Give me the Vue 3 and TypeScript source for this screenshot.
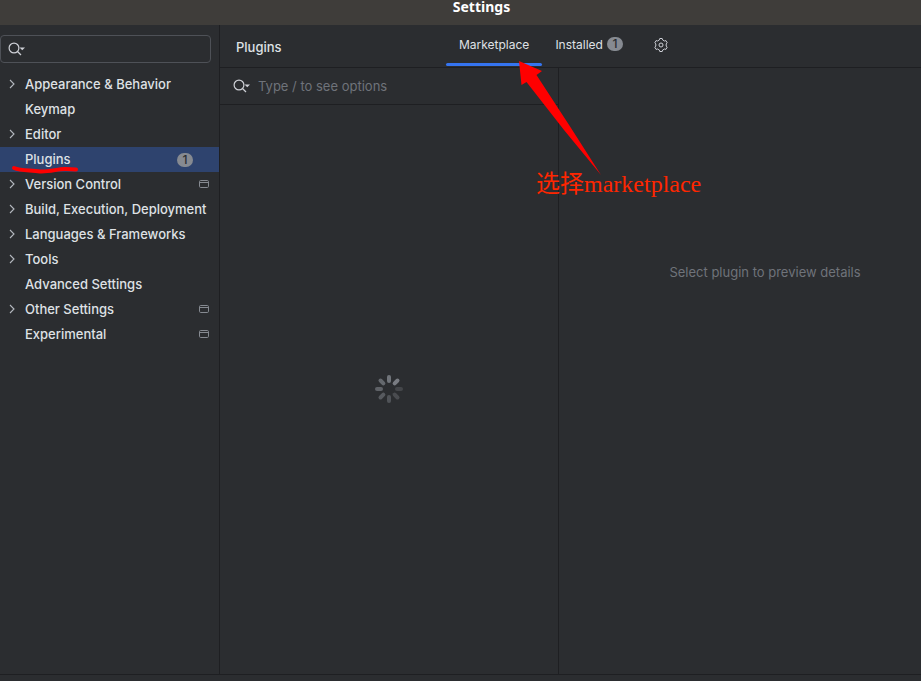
<script setup lang="ts">
import { ref } from 'vue'

interface Category {
  name: string
  expandable?: boolean
  count?: number
  projectLevel?: boolean
}

const categories: Category[] = [
  { name: 'Appearance & Behavior', expandable: true },
  { name: 'Keymap' },
  { name: 'Editor', expandable: true },
  { name: 'Plugins', count: 1 },
  { name: 'Version Control', expandable: true, projectLevel: true },
  { name: 'Build, Execution, Deployment', expandable: true },
  { name: 'Languages & Frameworks', expandable: true },
  { name: 'Tools', expandable: true },
  { name: 'Advanced Settings' },
  { name: 'Other Settings', expandable: true, projectLevel: true },
  { name: 'Experimental', projectLevel: true },
]

const selected = ref('Plugins')
const activeTab = ref('Marketplace')
const settingsQuery = ref('')
const pluginQuery = ref('')

const spokes = [
  { angle: 0, opacity: 0.85 },
  { angle: 45, opacity: 0.95 },
  { angle: 90, opacity: 0.3 },
  { angle: 135, opacity: 0.38 },
  { angle: 180, opacity: 0.46 },
  { angle: 225, opacity: 0.54 },
  { angle: 270, opacity: 0.64 },
  { angle: 315, opacity: 0.7 },
]
</script>

<template>
  <div class="window">
    <header class="titlebar">Settings</header>

    <div class="content">
      <aside class="sidebar">
        <label class="settings-search">
          <svg class="search-icon" width="18" height="14" viewBox="0 0 18 14" aria-hidden="true">
            <circle cx="6" cy="6" r="4.9" />
            <path d="M9.5 9.5 L13 13" />
            <path class="solid" d="M11.5 5.5 H17 L14.25 8.3 Z" />
          </svg>
          <input v-model="settingsQuery" type="text" aria-label="Search settings" />
        </label>

        <nav aria-label="Settings categories">
          <ul class="tree">
            <li v-for="item in categories" :key="item.name">
              <button
                type="button"
                class="tree-row"
                :class="{ selected: item.name === selected }"
                @click="selected = item.name"
              >
                <span class="toggle">
                  <svg v-if="item.expandable" width="6" height="10" viewBox="0 0 6 10" aria-hidden="true">
                    <path d="M1 1 L5 5 L1 9" />
                  </svg>
                </span>
                <span class="tree-label">{{ item.name }}</span>
                <span v-if="item.count" class="badge tree-badge">{{ item.count }}</span>
                <svg v-if="item.projectLevel" class="project-icon" width="10" height="8" viewBox="0 0 10 8" aria-hidden="true">
                  <rect x="0.5" y="0.5" width="9" height="7" rx="1.2" />
                  <path d="M0.5 2.5 H9.5" />
                </svg>
              </button>
            </li>
          </ul>
        </nav>
      </aside>

      <main class="main">
        <div class="page-header">
          <h1>Plugins</h1>
          <div class="tabs" role="tablist">
            <button
              type="button"
              role="tab"
              class="tab"
              :class="{ active: activeTab === 'Marketplace' }"
              :aria-selected="activeTab === 'Marketplace'"
              @click="activeTab = 'Marketplace'"
            >Marketplace</button>
            <button
              type="button"
              role="tab"
              class="tab"
              :class="{ active: activeTab === 'Installed' }"
              :aria-selected="activeTab === 'Installed'"
              @click="activeTab = 'Installed'"
            >Installed<span class="badge">1</span></button>
          </div>
          <button type="button" class="gear" aria-label="Plugin settings">
            <svg width="16" height="16" viewBox="0 0 16 16" aria-hidden="true">
              <path d="M6.4 2.9 L6.8 1.5 H9.2 L9.6 2.9 L11.5 4 L12.9 3.6 L14.2 5.8 L13.2 6.9 V9.1 L14.2 10.2 L12.9 12.4 L11.5 12 L9.6 13.1 L9.2 14.5 H6.8 L6.4 13.1 L4.5 12 L3.1 12.4 L1.8 10.2 L2.8 9.1 V6.9 L1.8 5.8 L3.1 3.6 L4.5 4 Z" />
              <circle cx="8" cy="8" r="2" />
            </svg>
          </button>
        </div>

        <div class="panes">
          <section class="plugin-list">
            <label class="plugin-search">
              <svg class="search-icon" width="18" height="14" viewBox="0 0 18 14" aria-hidden="true">
                <circle cx="6" cy="6" r="4.9" />
                <path d="M9.5 9.5 L13 13" />
                <path class="solid" d="M11.5 5.5 H17 L14.25 8.3 Z" />
              </svg>
              <input v-model="pluginQuery" type="text" placeholder="Type / to see options" aria-label="Search plugins" />
            </label>
            <div class="loading" role="status" aria-label="Loading">
              <svg width="28" height="28" viewBox="-14 -14 28 28">
                <rect
                  v-for="spoke in spokes"
                  :key="spoke.angle"
                  x="-2"
                  y="-14"
                  width="4"
                  height="8"
                  rx="2"
                  :opacity="spoke.opacity"
                  :transform="`rotate(${spoke.angle})`"
                />
              </svg>
            </div>
          </section>
          <section class="details">
            <p>Select plugin to preview details</p>
          </section>
        </div>
      </main>
    </div>

    <footer class="bottom"></footer>

    <svg class="underline-mark" width="70" height="10" viewBox="0 0 70 10" aria-hidden="true">
      <path d="M3 3 C10 6 20 5 29 6.500 C39 7 48 3.500 55 4 L65 4.500" />
    </svg>
    <svg class="arrow-mark" width="84" height="116" viewBox="0 0 84 116" aria-hidden="true">
      <path d="M1 0 L24 10 L18.500 14 L53 67 L83 114 L46 69 L8.500 21 L3.500 24 Z" />
    </svg>
    <p class="note">选择marketplace</p>
  </div>
</template>

<style>
body {
  margin: 0;
  background: #2b2d30;
}
</style>

<style scoped>
.window {
  position: relative;
  display: flex;
  flex-direction: column;
  min-height: 100vh;
  overflow: hidden;
  background: #2b2d30;
  color: #dfe1e5;
  font-family: Inter, "Noto Sans", sans-serif;
  font-size: 13px;
  line-height: 16px;
}

button,
input {
  margin: 0;
  padding: 0;
  border: 0;
  outline: 0;
  background: none;
  color: inherit;
  font: inherit;
}

.titlebar {
  height: 25px;
  padding-left: 42px;
  box-sizing: border-box;
  background: #3f3d3a;
  color: #ffffff;
  font: 700 14px/14px "Noto Sans", "Open Sans", sans-serif;
  text-align: center;
}

.content {
  display: flex;
  flex: 1;
}

.sidebar {
  flex: 0 0 219px;
  min-width: 0;
  border-right: 1px solid #1e1f22;
}

.settings-search {
  display: flex;
  align-items: center;
  height: 26px;
  margin: 10px 8px 9px 0;
  padding-left: 7px;
  border: 1px solid #4e5157;
  border-radius: 4px;
}

.search-icon {
  flex: none;
  fill: none;
  stroke: #ced0d6;
  stroke-width: 1.2;
}

.search-icon .solid {
  fill: #ced0d6;
  stroke: none;
}

input {
  flex: 1;
  min-width: 0;
}

input::placeholder {
  color: #6f737a;
  opacity: 1;
}

.tree {
  margin: 0;
  padding: 0;
  list-style: none;
}

.tree-row {
  display: flex;
  align-items: center;
  width: 100%;
  height: 25px;
  padding: 0 10px 2px 9px;
  box-sizing: border-box;
  font-weight: 500;
  text-align: left;
  white-space: nowrap;
}

.tree-row.selected {
  background: #2e436e;
}

.toggle {
  display: flex;
  flex: 0 0 16px;
  fill: none;
  stroke: #b4b8bf;
  stroke-width: 1.1;
}

.tree-label {
  flex: 1;
  min-width: 0;
}

.badge {
  display: inline-block;
  width: 16px;
  height: 14px;
  border-radius: 7px;
  background: #868a91;
  color: #2b2d30;
  font-size: 12px;
  font-weight: 500;
  line-height: 14px;
  text-align: center;
}

.tree-badge {
  margin: 2px 16px 0 0;
}

.project-icon {
  fill: none;
  stroke: #868a91;
}

.main {
  display: flex;
  flex: 1;
  flex-direction: column;
  min-width: 0;
}

.page-header {
  display: flex;
  height: 42px;
  border-bottom: 1px solid #1e1f22;
}

h1 {
  flex: 0 0 210px;
  margin: 0;
  padding: 14px 0 0 16px;
  font-size: 13px;
  font-weight: 500;
}

.tabs {
  display: flex;
}

.tab {
  display: flex;
  align-items: center;
  gap: 4px;
  height: 41px;
  padding: 1px 13px 0;
  box-sizing: border-box;
  border-bottom: 3px solid transparent;
  font-size: 12px;
  white-space: nowrap;
}

.tab.active {
  position: relative;
}

.tab.active::after {
  position: absolute;
  right: 0;
  bottom: -3px;
  left: 0;
  height: 3px;
  border-radius: 2px;
  background: #3574f0;
  content: "";
}

.tab .badge {
  margin-bottom: 1px;
}

.gear {
  align-self: flex-start;
  height: 16px;
  margin: 12px 0 0 17px;
  fill: none;
  stroke: #ced0d6;
}

.gear svg {
  display: block;
}

.panes {
  display: flex;
  flex: 1;
}

.plugin-list {
  display: flex;
  flex: 0 0 338px;
  flex-direction: column;
  border-right: 1px solid #1e1f22;
}

.plugin-search {
  display: flex;
  align-items: center;
  gap: 7px;
  height: 36px;
  padding-left: 13px;
  border-bottom: 1px solid #1e1f22;
}

.loading {
  display: flex;
  flex: 1;
  align-items: center;
  justify-content: center;
  padding-bottom: 2px;
  fill: #7d8187;
}

.details {
  flex: 1;
  padding: 196px 0 0 50px;
  color: #6f737a;
  text-align: center;
}

.details p {
  margin: 0;
}

.bottom {
  height: 6px;
  border-top: 1px solid #1e1f22;
}

.underline-mark {
  position: absolute;
  top: 165px;
  left: 11px;
  fill: none;
  stroke: #ff0000;
  stroke-linecap: round;
  stroke-width: 4;
}

.arrow-mark {
  position: absolute;
  top: 61px;
  left: 518px;
  fill: #ff0000;
}

.note {
  position: absolute;
  top: 170px;
  left: 536px;
  margin: 0;
  color: #ff2600;
  font: 24px/28px "Liberation Serif", "Noto Sans CJK SC", serif;
  white-space: nowrap;
}
</style>
